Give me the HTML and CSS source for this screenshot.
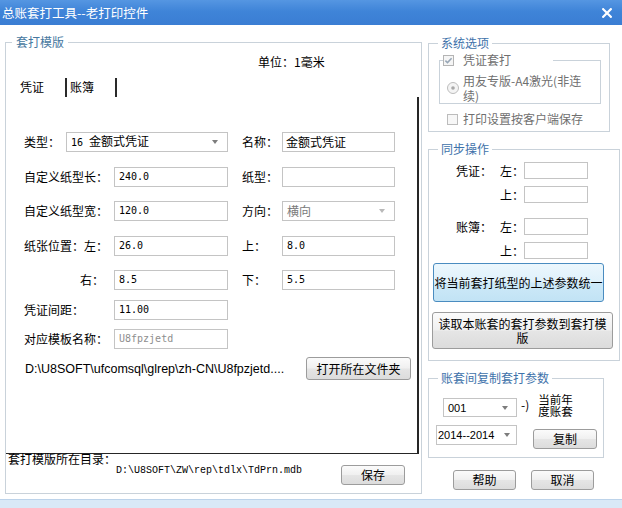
FILE: index.html
```html
<!DOCTYPE html>
<html lang="zh-CN">
<head>
<meta charset="utf-8">
<title>总账套打工具--老打印控件</title>
<link rel="stylesheet" href="styles.css">
</head>
<body>
<div class="window">
  <header class="titlebar">
    <span class="title">总账套打工具--老打印控件</span>
    <svg class="close" width="10" height="10" viewBox="0 0 10 10"><path d="M1.2 1.2L8.8 8.8M8.8 1.2L1.2 8.8" stroke="#fff" stroke-width="2.2" stroke-linecap="square"/></svg>
  </header>
  <main class="content">
    <fieldset class="grp tpl">
      <legend>套打模版</legend>
      <div class="unit">单位：1毫米</div>
      <div class="tabs">
        <span class="tab">凭证</span><span class="tab-sep"></span><span class="tab tab2">账簿</span><span class="tab-sep"></span>
      </div>
      <div class="panel">
        <div class="rows">
          <div class="row">
            <div class="cell lc"><span class="lbl w42">类型：</span><div class="field select w162"><span><span class="mono">16 </span>金额式凭证</span><i class="arrow"></i></div></div>
            <div class="cell rc"><span class="lbl w40">名称：</span><div class="field w113 pl3">金额式凭证</div></div>
          </div>
          <div class="row">
            <div class="cell lc"><span class="lbl w90">自定义纸型长：</span><div class="field w114 mono">240.0</div></div>
            <div class="cell rc"><span class="lbl w40">纸型：</span><div class="field w113"></div></div>
          </div>
          <div class="row">
            <div class="cell lc"><span class="lbl w90">自定义纸型宽：</span><div class="field w114 mono">120.0</div></div>
            <div class="cell rc"><span class="lbl w40">方向：</span><div class="field select w113 disabled"><span>横向</span><i class="arrow light"></i></div></div>
          </div>
          <div class="row">
            <div class="cell lc"><span class="lbl w90">纸张位置：左：</span><div class="field w114 mono">26.0</div></div>
            <div class="cell rc"><span class="lbl w40">上：</span><div class="field w113 mono">8.0</div></div>
          </div>
          <div class="row">
            <div class="cell lc"><span class="lbl w90 indent">右：</span><div class="field w114 mono">8.5</div></div>
            <div class="cell rc"><span class="lbl w40">下：</span><div class="field w113 mono">5.5</div></div>
          </div>
          <div class="row tight">
            <div class="cell lc"><span class="lbl w90">凭证间距：</span><div class="field w114 mono">11.00</div></div>
          </div>
          <div class="row tight">
            <div class="cell lc"><span class="lbl w90">对应模板名称：</span><div class="field w114 mono disabled">U8fpzjetd</div></div>
          </div>
        </div>
        <div class="pathrow">
          <span class="path">D:\U8SOFT\ufcomsql\glrep\zh-CN\U8fpzjetd....</span>
          <button class="btn open">打开所在文件夹</button>
        </div>
      </div>
      <div class="dirrow">
        <span class="dirlbl">套打模版所在目录：</span>
        <span class="dirpath">D:\U8SOFT\ZW\rep\tdlx\TdPrn.mdb</span>
        <button class="btn save">保存</button>
      </div>
    </fieldset>

    <div class="side">
      <fieldset class="grp sys">
        <legend>系统选项</legend>
        <fieldset class="inner">
          <legend class="chklegend"><span class="chkwrap">
            <svg class="chk" width="11" height="11" viewBox="0 0 11 11"><rect x="0.5" y="0.5" width="10" height="10" fill="#f5f5f5" stroke="#b4b4b4"/><path d="M2.4 5.6L4.5 7.6L8.6 3.2" fill="none" stroke="#97a6b6" stroke-width="1.5"/></svg>
            <span class="dis">凭证套打</span></span></legend>
          <div class="radiorow">
            <svg class="radio" width="12" height="12" viewBox="0 0 12 12"><circle cx="6" cy="6" r="5.5" fill="#f4f4f4" stroke="#bcbcbc"/><circle cx="6" cy="6" r="1.8" fill="#a8a8a8"/></svg>
            <span class="dis radiotext">用友专版-A4激光(非连<br>续)</span>
          </div>
        </fieldset>
        <div class="chkrow">
          <svg class="chk" width="11" height="11" viewBox="0 0 11 11"><rect x="0.5" y="0.5" width="10" height="10" fill="#f7f7f7" stroke="#bcbcbc"/></svg>
          <span class="dis">打印设置按客户端保存</span>
        </div>
      </fieldset>

      <fieldset class="grp sync">
        <legend>同步操作</legend>
        <div class="srow first"><span class="s1">凭证：</span><span class="s2">左：</span><div class="sfield"></div></div>
        <div class="srow"><span class="s1"></span><span class="s2">上：</span><div class="sfield"></div></div>
        <div class="srow gap"><span class="s1">账簿：</span><span class="s2">左：</span><div class="sfield"></div></div>
        <div class="srow"><span class="s1"></span><span class="s2">上：</span><div class="sfield"></div></div>
        <button class="btn blue">将当前套打纸型的上述参数统一</button>
        <button class="btn read">读取本账套的套打参数到套打模<br>版</button>
      </fieldset>

      <fieldset class="grp copy">
        <legend>账套间复制套打参数</legend>
        <div class="crow1">
          <div class="field select sel001"><span>001</span><i class="arrow"></i></div>
          <span class="to">-)</span>
          <span class="cur">当前年<br>度账套</span>
        </div>
        <div class="crow2">
          <div class="field select selyear"><span>2014--2014</span><i class="arrow"></i></div>
          <button class="btn copybtn">复制</button>
        </div>
      </fieldset>

      <div class="actions">
        <button class="btn act">帮助</button>
        <button class="btn act">取消</button>
      </div>
    </div>
  </main>
  <footer class="footer"></footer>
</div>
</body>
</html>
```

FILE: styles.css
```css
* { box-sizing: border-box; }
html, body { margin: 0; padding: 0; }
body {
  width: 622px; height: 508px; overflow: hidden;
  background: #fff;
  font-family: "Noto Sans CJK SC", "Noto Sans", sans-serif;
  font-size: 12px; color: #000;
}
.window { display: flex; flex-direction: column; height: 508px; }

.titlebar {
  height: 25px; flex: none;
  background: linear-gradient(#5596e2 0%, #3f84d8 45%, #3a7dd3 100%);
  display: flex; align-items: center; justify-content: space-between;
  padding: 0 10px 0 2px; color: #fff;
}
.title { font-size: 12.5px; line-height: 25px; }
.close { display: block; margin-top: 1px; }

.content { flex: 1; display: flex; align-items: flex-start; overflow: hidden; }
.footer { height: 9px; flex: none; background: #d9e9f7; border-top: 1px solid #bcd3ea; }

.grp {
  margin: 0; padding: 0; min-width: 0;
  border: 1px solid #c9d2da;
}
.grp > legend {
  padding: 0 3px; margin-left: 9px;
  line-height: 14px; font-size: 12px; color: #3e72aa;
}

/* left template group */
.tpl { margin: 10px 0 0 5px; width: 417px; }
.tpl > legend { margin-left: 6px; padding: 0 4px; color: #46789f; }
.unit { margin: 6px 0 0 252px; line-height: 14px; height: 14px; }
.tabs { margin-top: 8px; height: 20px; display: flex; align-items: center; padding-left: 14px; }
.tab { line-height: 14px; }
.tab-sep { width: 2px; height: 19px; background: #2a2a2a; margin-left: 21px; }
.tab2 { margin-left: 3px; }

.panel {
  width: 413px; height: 357px;
  border-right: 2px solid #262626; border-bottom: 1px solid #262626;
  padding: 35px 6px 0 18px;
}
.row { display: flex; height: 20px; }
.row + .row { margin-top: 14.5px; }
.row.tight { margin-top: 9.5px; }
.cell { display: flex; align-items: center; }
.lc { width: 204px; margin-right: 14px; }
.rc { width: 153px; }
.lbl { line-height: 14px; white-space: nowrap; }
.w42 { width: 42px; }
.w40 { width: 40px; }
.w90 { width: 90px; }
.indent { padding-left: 56px; }

.field {
  height: 20px; border: 1px solid #c4c4c4; background: #fff;
  display: flex; align-items: center; padding: 0 4px;
  line-height: 14px; white-space: nowrap;
}
.w162 { width: 162px; }
.w113 { width: 113px; }
.w114 { width: 114px; }
.pl3 { padding-left: 3px; }
.mono { font-family: "DejaVu Sans Mono", monospace; font-size: 10px; }
.field.mono { font-size: 10px; }
.select { justify-content: space-between; padding-right: 9px; }
.arrow {
  width: 0; height: 0;
  border-left: 3.5px solid transparent; border-right: 3.5px solid transparent;
  border-top: 4px solid #7d7d7d;
}
.arrow.light { border-top-color: #b9b9b9; }
.disabled { color: #7a7a7a; }
.field.mono.disabled { color: #8e8e8e; }

.pathrow {
  margin-top: 8px; display: flex; align-items: center; justify-content: space-between;
  padding-left: 1px;
}
.path { font-family: "Liberation Sans", Arial, sans-serif; font-size: 12.5px; line-height: 14px; }

.btn {
  font-family: "Noto Sans CJK SC", sans-serif; font-size: 12px; line-height: 14px; color: #000;
  border: 1px solid #9c9c9c; border-radius: 3px; padding: 0;
  background: linear-gradient(#fbfbfb 0%, #f0f0f0 48%, #e5e5e5 52%, #dcdcdc 100%);
}
.open { width: 105px; height: 23px; }

.dirrow { height: 39px; display: flex; align-items: flex-start; padding-left: 2px; }
.dirlbl { line-height: 12px; margin-top: -1px; }
.dirpath { font-family: "Liberation Mono", monospace; font-size: 10px; line-height: 12px; margin-top: 11px; }
.save { width: 64px; height: 20px; margin: 11px 16px 0 auto; }

/* right side */
.side { margin-left: 6px; display: flex; flex-direction: column; align-items: flex-start; }
.sys { margin-top: 11px; width: 182px; padding-bottom: 5px; }
.inner { margin: 3px 0 0 10px; width: 162px; padding: 0; min-width: 0; border: 1px solid #c9d2da; }
.chklegend { margin-left: 3px; padding: 0 42px 0 0; line-height: 14px; }
.chkwrap { display: flex; align-items: center; height: 14px; }
.chk { display: block; flex: none; }
.chkwrap .chk { margin-right: 9px; }
.dis { color: #6f6f6f; }
.radiorow { display: flex; align-items: center; margin-top: 6px; }
.radio { display: block; flex: none; margin-left: 7px; }
.radiotext { margin-left: 4px; line-height: 15px; }
.chkrow { display: flex; align-items: center; height: 14px; margin: 8px 0 0 18px; line-height: 14px; }
.chkrow .chk { margin-right: 5px; }

.sync { margin-top: 10px; width: 192px; padding-bottom: 11px; }
.srow { display: flex; align-items: center; height: 17px; margin: 7px 0 0 27px; }
.srow.first { margin-top: 6px; }
.srow.gap { margin-top: 15px; }
.s1 { width: 44px; line-height: 14px; }
.s2 { width: 24px; line-height: 14px; }
.sfield { width: 64px; height: 17px; border: 1px solid #c4c4c4; background: #fff; }
.blue {
  display: block; margin: 4px 0 0 4px; width: 171px; height: 39px;
  border-color: #4a8cc0;
  background: linear-gradient(#ecf7fd 0%, #dff1fb 48%, #cde9f8 52%, #c2e3f5 100%);
}
.read { display: block; margin: 10px 0 0 3px; width: 181px; height: 37px; line-height: 13.5px; }

.copy { margin-top: 10px; width: 176px; padding-bottom: 8px; }
.crow1 { display: flex; align-items: center; height: 24px; margin-top: 8px; }
.sel001 { width: 74px; height: 19px; margin-left: 14px; align-self: flex-end; font-family: "Liberation Sans", Arial, sans-serif; font-size: 11px; padding-right: 8px; }
.to { margin-left: 4px; line-height: 14px; }
.cur { margin-left: 9px; line-height: 12px; font-size: 11.5px; }
.crow2 { display: flex; height: 24px; margin-top: 8px; }
.selyear { width: 81px; height: 20px; margin-left: 7px; align-self: flex-start; padding-left: 1px; padding-right: 6px; font-family: "Liberation Sans", Arial, sans-serif; font-size: 11px; }
.copybtn { width: 64px; height: 20px; margin-left: 16px; align-self: flex-end; }

.actions { display: flex; gap: 15px; margin: 12px 0 0 25px; }
.act { width: 63px; height: 20px; }
```
